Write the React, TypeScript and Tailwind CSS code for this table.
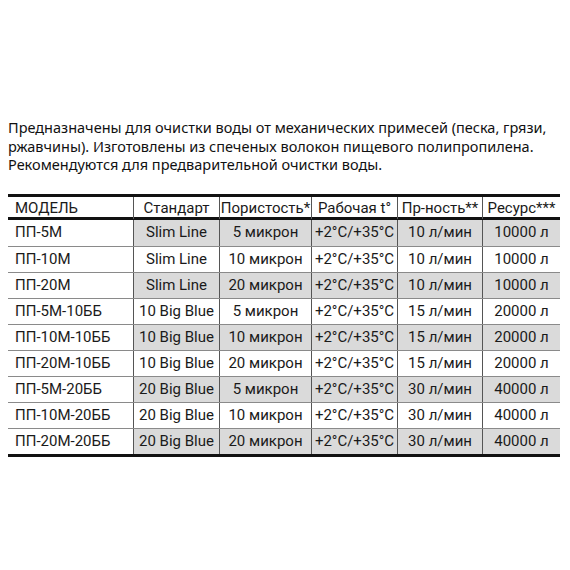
const rows = [
  ['ПП-5М', 'Slim Line', '5 микрон', '10 л/мин', '10000 л'],
  ['ПП-10М', 'Slim Line', '10 микрон', '10 л/мин', '10000 л'],
  ['ПП-20М', 'Slim Line', '20 микрон', '10 л/мин', '10000 л'],
  ['ПП-5М-10ББ', '10 Big Blue', '5 микрон', '15 л/мин', '20000 л'],
  ['ПП-10М-10ББ', '10 Big Blue', '10 микрон', '15 л/мин', '20000 л'],
  ['ПП-20М-10ББ', '10 Big Blue', '20 микрон', '15 л/мин', '20000 л'],
  ['ПП-5М-20ББ', '20 Big Blue', '5 микрон', '30 л/мин', '40000 л'],
  ['ПП-10М-20ББ', '20 Big Blue', '10 микрон', '30 л/мин', '40000 л'],
  ['ПП-20М-20ББ', '20 Big Blue', '20 микрон', '30 л/мин', '40000 л'],
];

const cols = 'grid grid-cols-[125px_86px_92px_86px_85px_78px]';

export default function App() {
  return (
    <div className="w-[570px] h-[570px] bg-white text-[#1a1a1a]" style={{ fontFamily: 'Roboto, "Noto Sans", sans-serif' }}>
      <p className="pl-[8px] pt-[118px] text-[14.5px] leading-[18.5px] text-[#111]" style={{ fontFamily: '"Noto Sans", sans-serif' }}>
        Предназначены для очистки воды от механических примесей (песка, грязи,
        <br />
        ржавчины). Изготовлены из спеченых волокон пищевого полипропилена.
        <br />
        Рекомендуются для предварительной очистки воды.
      </p>

      <div className="mx-[8px] mt-[20px] w-[552px] border-t-[3px] border-b-[3px] border-[#111] text-[15px]">
        {/* header */}
        <div className={`${cols} h-[23px] border-b-[3px] border-[#111]`}>
          <div className="pl-[7px] flex items-center">МОДЕЛЬ</div>
          <div className="flex items-center justify-center border-l border-[#555]">Стандарт</div>
          <div className="flex items-center justify-center border-l border-[#555]">Пористость*</div>
          <div className="flex items-center justify-center border-l border-[#555]">Рабочая t°</div>
          <div className="flex items-center justify-center border-l border-[#555]">Пр-ность**</div>
          <div className="flex items-center justify-center border-l border-[#555]">Ресурс***</div>
        </div>

        {rows.map((r, i) => {
          const shade = i % 2 === 0 ? 'bg-[#dadada]' : 'bg-white';
          return (
            <div key={r[0]} className={`${cols} h-[26px] ${i > 0 ? 'border-t border-[#8a8a8a]' : ''}`}>
              <div className="pl-[7px] flex items-center bg-white">{r[0]}</div>
              <div className={`flex items-center justify-center border-l border-[#555] ${shade}`}>{r[1]}</div>
              <div className={`flex items-center justify-center border-l border-[#555] ${shade}`}>{r[2]}</div>
              <div className={`flex items-center justify-center border-l border-[#555] ${shade}`}>+2°C/+35°C</div>
              <div className={`flex items-center justify-center border-l border-[#555] ${shade}`}>{r[3]}</div>
              <div className={`flex items-center justify-center border-l border-[#555] ${shade}`}>{r[4]}</div>
            </div>
          );
        })}
      </div>
    </div>
  );
}
